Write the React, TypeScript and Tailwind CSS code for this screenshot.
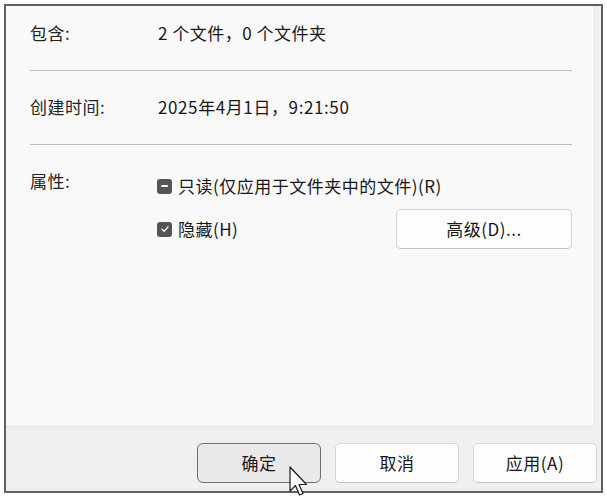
import React from "react";

const font = { fontFamily: '"Noto Sans CJK SC", "Noto Sans", sans-serif' };

function Box({ kind }: { kind: "dash" | "check" }) {
  return (
    <span className="flex h-[15px] w-[15px] shrink-0 items-center justify-center rounded-[3px] bg-[#555555]">
      {kind === "dash" ? (
        <span className="h-[2px] w-[7px] rounded-full bg-white" />
      ) : (
        <svg width="10" height="10" viewBox="0 0 10 10">
          <path d="M2 5.2 L4.2 7.3 L8 2.8" fill="none" stroke="#ffffff" strokeWidth="1.3" strokeLinecap="round" strokeLinejoin="round" />
        </svg>
      )}
    </span>
  );
}

export default function App() {
  return (
    <div className="relative h-[498px] w-[607px] overflow-hidden bg-white" style={font}>
      <div className="ml-[4px] mt-[4px] flex h-[489px] w-[599px] flex-col border-2 border-[#616161] bg-[#f0f0f0]">
        <div className="mr-[6px] flex h-[421px] flex-col border-b border-r border-[#e4e4e4] bg-[#f9f9f9] pl-[24px] pr-[22px] pt-[15px] text-[17px] leading-[24px] text-[#171717]">
          <div className="flex">
            <span className="w-[128px] tracking-[0.5px] text-[#242424]">包含:</span>
            <span className="tracking-[0.5px]">2 个文件，0 个文件夹</span>
          </div>
          <div className="mt-[25px] h-px bg-[#bcbcbc]" />
          <div className="mt-[24px] flex">
            <span className="w-[128px] tracking-[0.5px] text-[#242424]">创建时间:</span>
            <span className="tracking-[0.6px]">2025年4月1日，9:21:50</span>
          </div>
          <div className="mt-[25px] h-px bg-[#bcbcbc]" />
          <div className="mt-[24px] flex">
            <span className="w-[127px] shrink-0 tracking-[0.5px] text-[#242424]">属性:</span>
            <div className="flex flex-1 flex-col">
              <div className="mt-[5px] flex items-center gap-[6px]">
                <Box kind="dash" />
                <span className="tracking-[0.5px]">只读(仅应用于文件夹中的文件)(R)</span>
              </div>
              <div className="mt-[11px] flex h-[40px] items-center">
                <div className="flex items-center gap-[6px]">
                  <Box kind="check" />
                  <span className="tracking-[0.5px]">隐藏(H)</span>
                </div>
                <button className="ml-auto flex h-[40px] w-[176px] items-center justify-center rounded-[5px] border border-[#d3d3d3] border-b-[#c2c2c2] bg-[#fdfdfd] text-[17px] tracking-[0.5px] text-[#171717]">
                  高级(D)...
                </button>
              </div>
            </div>
          </div>
        </div>
        <div className="flex flex-1 items-start justify-end gap-[14px] pr-[4px] pt-[16px] text-[17px] tracking-[0.5px] text-[#171717]">
          <button className="flex h-[40px] w-[124px] items-center justify-center rounded-[6px] border border-[#6e6e6e] bg-[#e9e9e9]">
            确定
          </button>
          <button className="flex h-[40px] w-[124px] items-center justify-center rounded-[5px] border border-[#d6d6d6] border-b-[#c4c4c4] bg-[#fdfdfd]">
            取消
          </button>
          <button className="flex h-[40px] w-[124px] items-center justify-center rounded-[5px] border border-[#d6d6d6] border-b-[#c4c4c4] bg-[#fdfdfd]">
            应用(A)
          </button>
        </div>
      </div>
      <svg className="absolute left-[289px] top-[466px]" width="20" height="32" viewBox="0 0 20 32">
        <path
          d="M1 1 L1 25 L6.5 19.5 L10.5 29 L14 27.5 L10 18.5 L17.5 18.5 Z"
          fill="#ffffff"
          stroke="#1a1a1a"
          strokeWidth="1.2"
          strokeLinejoin="round"
        />
      </svg>
    </div>
  );
}
